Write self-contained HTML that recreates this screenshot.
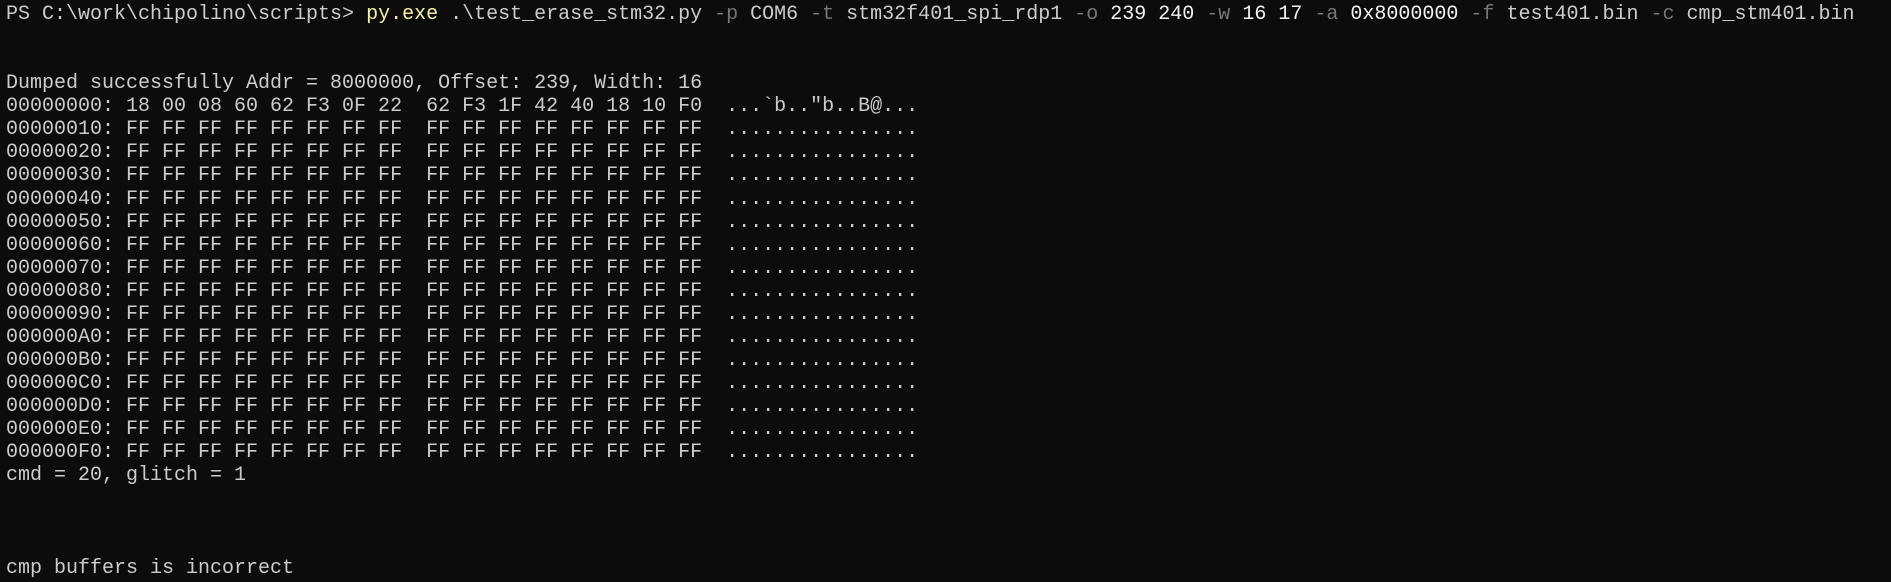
<!DOCTYPE html>
<html><head><meta charset="utf-8"><style>
html,body{margin:0;padding:0;background:#0c0c0c;width:1891px;height:582px;overflow:hidden}
pre{margin:0;padding:3px 0 0 6px;font-family:"Liberation Mono",monospace;font-size:20px;line-height:23.07px;color:#cccccc;white-space:pre}
.y{color:#f9f1a5}.g{color:#767676}.w{color:#f2f2f2}
</style></head><body><pre>PS C:\work\chipolino\scripts&gt; <span class="y">py.exe</span> .\test_erase_stm32.py <span class="g">-p</span> COM6 <span class="g">-t</span> stm32f401_spi_rdp1 <span class="g">-o</span> <span class="w">239 240</span> <span class="g">-w</span> <span class="w">16 17</span> <span class="g">-a</span> <span class="w">0x8000000</span> <span class="g">-f</span> test401.bin <span class="g">-c</span> cmp_stm401.bin


Dumped successfully Addr = 8000000, Offset: 239, Width: 16
00000000: 18 00 08 60 62 F3 0F 22  62 F3 1F 42 40 18 10 F0  ...`b.."b..B@...
00000010: FF FF FF FF FF FF FF FF  FF FF FF FF FF FF FF FF  ................
00000020: FF FF FF FF FF FF FF FF  FF FF FF FF FF FF FF FF  ................
00000030: FF FF FF FF FF FF FF FF  FF FF FF FF FF FF FF FF  ................
00000040: FF FF FF FF FF FF FF FF  FF FF FF FF FF FF FF FF  ................
00000050: FF FF FF FF FF FF FF FF  FF FF FF FF FF FF FF FF  ................
00000060: FF FF FF FF FF FF FF FF  FF FF FF FF FF FF FF FF  ................
00000070: FF FF FF FF FF FF FF FF  FF FF FF FF FF FF FF FF  ................
00000080: FF FF FF FF FF FF FF FF  FF FF FF FF FF FF FF FF  ................
00000090: FF FF FF FF FF FF FF FF  FF FF FF FF FF FF FF FF  ................
000000A0: FF FF FF FF FF FF FF FF  FF FF FF FF FF FF FF FF  ................
000000B0: FF FF FF FF FF FF FF FF  FF FF FF FF FF FF FF FF  ................
000000C0: FF FF FF FF FF FF FF FF  FF FF FF FF FF FF FF FF  ................
000000D0: FF FF FF FF FF FF FF FF  FF FF FF FF FF FF FF FF  ................
000000E0: FF FF FF FF FF FF FF FF  FF FF FF FF FF FF FF FF  ................
000000F0: FF FF FF FF FF FF FF FF  FF FF FF FF FF FF FF FF  ................
cmd = 20, glitch = 1



cmp buffers is incorrect
</pre></body></html>
